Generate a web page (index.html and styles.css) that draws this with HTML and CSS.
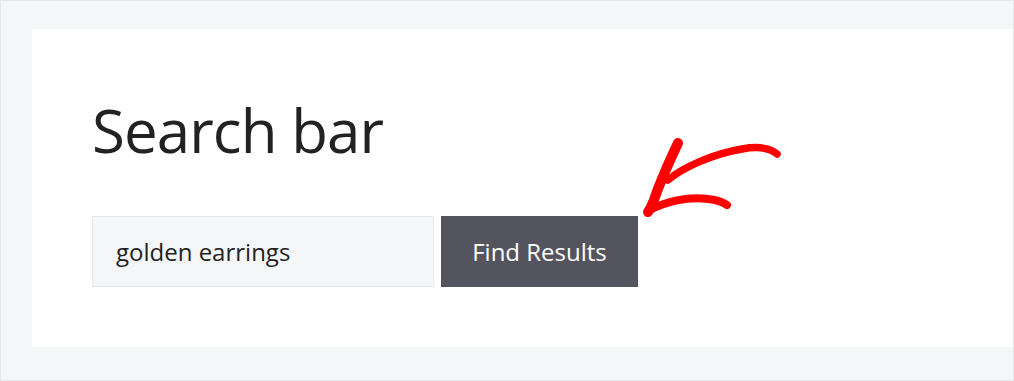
FILE: index.html
```html
<!DOCTYPE html>
<html lang="en">
<head>
<meta charset="utf-8">
<title>Search bar</title>
<link rel="stylesheet" href="styles.css">
</head>
<body>
<div class="page">
  <main class="card">
    <h1 class="title">Search bar</h1>
    <form class="search" onsubmit="return false">
      <input class="search-input" type="text" value="golden earrings" aria-label="Search">
      <button class="search-btn" type="submit">Find Results</button>
    </form>
    <svg class="arrow" width="170" height="100" viewBox="0 0 170 100" aria-hidden="true">
      <g fill="none" stroke="#ff0000" stroke-linecap="round" stroke-linejoin="round">
        <path d="M58 13 C50 30 40 52 34 70 C32 75 30 79 28 82" stroke-width="10"/>
        <path d="M30 80 C45 72 68 66 88 69 C97 70 103 72 107 75" stroke-width="8"/>
        <path d="M48 50 C62 38 92 24 122 19 C138 16 150 18 157 24" stroke-width="7.5"/>
      </g>
    </svg>
  </main>
</div>
</body>
</html>
```
FILE: styles.css
```css
* { box-sizing: border-box; }
html, body { margin: 0; padding: 0; }
body {
  width: 1014px;
  height: 381px;
  font-family: "Open Sans", "Noto Sans", sans-serif;
  color: #222;
}
.page {
  height: 381px;
  background: #f5f6f8;
  border: 1px solid #e4e6e9;
  padding: 28px 0 33px 31px;
}
.card {
  position: relative;
  height: 318px;
  background: #fff;
  padding: 71px 0 0 60px;
}
.title {
  margin: 0;
  font-weight: 400;
  font-size: 60px;
  line-height: 60px;
  letter-spacing: -0.9px;
  color: #222;
}
.search {
  display: flex;
  gap: 7px;
  margin-top: 56px;
}
.search-input {
  width: 342px;
  height: 71px;
  margin: 0;
  border: 1px solid #e6e8ea;
  background: #f5f6f8;
  padding: 0 0 0 23px;
  font-family: inherit;
  font-size: 24px;
  color: #222;
  outline: none;
}
.search-btn {
  width: 197px;
  height: 71px;
  margin: 0;
  border: 0;
  background: #54545e;
  color: #fff;
  font-family: inherit;
  font-size: 24px;
  padding: 0;
}
.arrow {
  position: absolute;
  left: 588px;
  top: 101px;
}
```
